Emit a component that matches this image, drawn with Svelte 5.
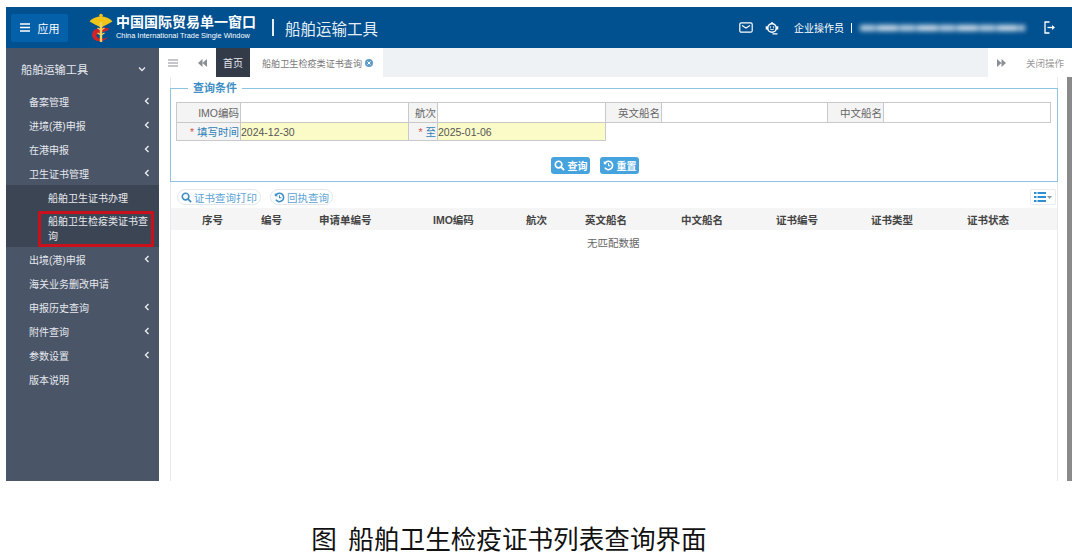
<script>
  const cjk = ['备案管理', '进境(港)申报', '在港申报'];
  const tail = [
    { text: '出境(港)申报', arrow: true },
    { text: '海关业务删改申请', arrow: false },
    { text: '申报历史查询', arrow: true },
    { text: '附件查询', arrow: true },
    { text: '参数设置', arrow: true },
    { text: '版本说明', arrow: false }
  ];
  const columns = [
    ['序号', 59], ['编号', 58], ['申请单编号', 114], ['IMO编码', 93], ['航次', 59],
    ['英文船名', 96], ['中文船名', 95], ['证书编号', 95], ['证书类型', 96], ['证书状态', 91]
  ];
</script>

{#snippet chevron()}
  <svg class="chev" viewBox="0 0 6 8" width="6" height="8"><path d="M4.500 1 1.500 4l3 3" fill="none" stroke="#e8ebef" stroke-width="1.400" /></svg>
{/snippet}

{#snippet searchIcon(color)}
  <svg viewBox="0 0 12 12" width="11" height="11"><circle cx="5" cy="5" r="3.600" fill="none" stroke={color} stroke-width="1.800" /><path d="M7.600 7.600 11 11" stroke={color} stroke-width="2" /></svg>
{/snippet}

{#snippet resetIcon(color)}
  <svg viewBox="0 0 12 12" width="11" height="11"><path d="M2.200 3.200A4.600 4.600 0 1 1 2 8.400" fill="none" stroke={color} stroke-width="1.700" /><path d="M.8 1v3.600h3.600z" fill={color} /><path d="M6 3.600v2.800h2.200" fill="none" stroke={color} stroke-width="1.100" /></svg>
{/snippet}

<div class="page">
  <header>
    <div class="apps">
      <svg viewBox="0 0 10 9" width="10" height="9"><path d="M0 1h10M0 4.500h10M0 8h10" stroke="#fff" stroke-width="1.400" /></svg>
      <span>应用</span>
    </div>
    <svg class="logo" viewBox="0 0 24 30" width="24" height="30">
      <path d="M12 3.500C8 3.500 3 5 .6 8.500 4 10.500 8 12.500 10.800 14h2.400C16 12.500 20 10.500 23.400 8.500 21 5 16 3.500 12 3.500z" fill="#f0c419" />
      <circle cx="12" cy="2.500" r="1.800" fill="#f0c419" />
      <path d="M4 18.500C6 14.500 17 14 20 15.500 20.500 19 9 18.500 7.500 22 7 26 15 27 19 24 15 29.500 6.500 29.500 4 25 2.500 22.500 3 20.500 4 18.500z" fill="#d3232a" />
      <rect x="10.800" y="9" width="2.400" height="20" fill="#f3d25a" />
      <path d="M8.500 15c3 2 4 2 7 0M8.500 20c3 2 4 2 7 0" fill="none" stroke="#f3d25a" stroke-width="1.300" />
    </svg>
    <div class="brand">
      <div class="cn">中国国际贸易单一窗口</div>
      <div class="en">China International Trade Single Window</div>
    </div>
    <div class="bar"></div>
    <div class="product">船舶运输工具</div>
    <div class="tools">
      <svg viewBox="0 0 14 11" width="14" height="11"><rect x=".8" y=".8" width="12.400" height="9.400" rx="1.500" fill="none" stroke="#fff" stroke-width="1.200" /><path d="M3 3.500 7 6l4-2.500" fill="none" stroke="#fff" stroke-width="1.200" /></svg>
      <svg class="bot" viewBox="0 0 14 14" width="14" height="14"><circle cx="7" cy="7" r="4.300" fill="none" stroke="#fff" stroke-width="1.600" /><path d="M1.400 5.200v3.400M12.600 5.200v3.400M7 1v1.500M7.500 12.900h5" stroke="#fff" stroke-width="1.400" /><path d="M5 7.800c1 1.200 3 1.200 4 0" fill="none" stroke="#fff" stroke-width=".9" /><circle cx="5.400" cy="6" r=".8" fill="#fff" /><circle cx="8.600" cy="6" r=".8" fill="#fff" /></svg>
      <span class="role">企业操作员</span>
      <span class="sep"></span>
      <span class="blurred"></span>
      <svg class="out" viewBox="0 0 12 13" width="12" height="13"><path d="M5.500 1H1v11h4.500" fill="none" stroke="#fff" stroke-width="1.300" /><path d="M3.500 6.500h6" stroke="#fff" stroke-width="1.300" /><path d="M8 4l3 2.500L8 9z" fill="#fff" /></svg>
    </div>
  </header>

  <div class="main">
    <aside>
      <div class="side-title">
        <span>船舶运输工具</span>
        <svg viewBox="0 0 8 6" width="8" height="6"><path d="M1 1.500 4 4.500l3-3" fill="none" stroke="#e8ebef" stroke-width="1.300" /></svg>
      </div>
      <nav>
        {#each cjk as text}
          <div class="item"><span>{text}</span>{@render chevron()}</div>
        {/each}
        <div class="item"><span>卫生证书管理</span>{@render chevron()}</div>
        <div class="sub">
          <div class="sub-item">船舶卫生证书办理</div>
          <div class="sub-item wrap">船舶卫生检疫类证书查询</div>
          <div class="marker"></div>
        </div>
        {#each tail as row}
          <div class="item"><span>{row.text}</span>{#if row.arrow}{@render chevron()}{/if}</div>
        {/each}
      </nav>
    </aside>

    <section class="content">
      <div class="tabs">
        <svg class="tab-menu" viewBox="0 0 10 8" width="10" height="8"><path d="M0 1h10M0 4h10M0 7h10" stroke="#8a8f94" stroke-width="1" /></svg>
        <svg class="tab-back" viewBox="0 0 9 8" width="9" height="8"><path d="M4.500 0v8L0 4zM9 0v8L4.500 4z" fill="#8a8f94" /></svg>
        <div class="tab-home">首页</div>
        <div class="tab-open">
          <span>船舶卫生检疫类证书查询</span>
          <svg viewBox="0 0 8 8" width="8" height="8"><circle cx="4" cy="4" r="4" fill="#5f9cc4" /><path d="M2.500 2.500l3 3M5.500 2.500l-3 3" stroke="#fff" stroke-width="1" /></svg>
        </div>
        <div class="tab-fill"></div>
        <svg class="tab-next" viewBox="0 0 9 8" width="9" height="8"><path d="M0 0v8l4.500-4zM4.500 0v8L9 4z" fill="#8a8f94" /></svg>
        <div class="tab-close">关闭操作</div>
      </div>

      <div class="body">
        <div class="pane">
          <fieldset>
            <legend>查询条件</legend>
            <div class="form">
              <div class="label">IMO编码</div><div class="field"></div>
              <div class="label">航次</div><div class="field"></div>
              <div class="label">英文船名</div><div class="field"></div>
              <div class="label">中文船名</div><div class="field"></div>
              <div class="label req"><i>*</i> 填写时间</div><div class="field must">2024-12-30</div>
              <div class="label req"><i>*</i> 至</div><div class="field must">2025-01-06</div>
            </div>
            <div class="actions">
              <button>{@render searchIcon('#fff')}<span>查询</span></button>
              <button>{@render resetIcon('#fff')}<span>重置</span></button>
            </div>
          </fieldset>

          <div class="toolbar">
            <button class="pill">{@render searchIcon('#3f8fc4')}<span>证书查询打印</span></button>
            <button class="pill">{@render resetIcon('#3f8fc4')}<span>回执查询</span></button>
            <button class="view">
              <svg viewBox="0 0 12 10" width="12" height="10"><path d="M0 1h2.500M0 5h2.500M0 9h2.500" stroke="#2f8fd0" stroke-width="2" /><path d="M3.500 1H12M3.500 5H12M3.500 9H12" stroke="#2f8fd0" stroke-width="2" /></svg>
              <svg viewBox="0 0 5 3" width="5" height="3"><path d="M0 0h5L2.500 3z" fill="#8a9aa8" /></svg>
            </button>
          </div>

          <div class="thead">
            {#each columns as [name, width]}
              <div style="width: {width}px">{name}</div>
            {/each}
          </div>
          <div class="empty">无匹配数据</div>
        </div>
        <div class="scroll"></div>
      </div>
    </section>
  </div>

  <div class="caption">图&nbsp;&nbsp;船舶卫生检疫证书列表查询界面</div>
</div>

<style>
  :global(body) {
    margin: 0;
    background: #fff;
  }

  .page {
    width: 1072px;
    height: 560px;
    box-sizing: border-box;
    padding: 7px 0 0 6px;
    overflow: hidden;
    font-family: "Liberation Sans", "Noto Sans CJK SC", sans-serif;
    font-size: 11px;
    color: #555;
  }

  header {
    height: 41px;
    background: #01508f;
    display: flex;
    align-items: center;
    color: #fff;
  }

  .apps {
    width: 57px;
    height: 28px;
    margin-left: 5px;
    background: #0560aa;
    border-radius: 2px;
    display: flex;
    align-items: center;
    justify-content: center;
    gap: 8px;
    font-size: 11px;
  }

  .logo {
    margin-left: 21px;
  }

  .brand {
    margin-left: 3px;
  }

  .cn {
    font-size: 14px;
    font-weight: 700;
    line-height: 17px;
  }

  .en {
    font-size: 7.400px;
    line-height: 10px;
  }

  .bar {
    width: 2px;
    height: 17px;
    background: #e6eef5;
    margin-left: 16px;
  }

  .product {
    font-size: 15.500px;
    margin-left: 11px;
    color: #e6eef5;
  }

  .tools {
    margin-left: auto;
    display: flex;
    align-items: center;
    height: 100%;
  }

  .bot {
    margin-left: 12px;
  }

  .role {
    font-size: 10px;
    margin-left: 15px;
  }

  .sep {
    width: 1px;
    height: 10px;
    background: #fff;
    margin-left: 7px;
  }

  .blurred {
    width: 165px;
    height: 6px;
    margin-left: 8px;
    background: repeating-linear-gradient(90deg, #c3d5e5 0 14px, #8fb3d0 14px 18px, #d5e0ea 18px 37px, #86abca 37px 40px);
    filter: blur(2.500px);
  }

  .out {
    margin: 0 16px 0 19px;
  }

  .main {
    display: flex;
    height: 433px;
  }

  aside {
    width: 153px;
    flex: none;
    background: #4a5568;
    color: #e6e9ee;
  }

  .side-title {
    height: 41px;
    padding: 0 13px 0 15px;
    display: flex;
    align-items: center;
    justify-content: space-between;
    font-size: 11.200px;
    box-sizing: border-box;
  }

  .item {
    height: 24px;
    padding: 0 9px 0 23px;
    display: flex;
    align-items: center;
    justify-content: space-between;
    font-size: 10px;
  }

  .sub {
    position: relative;
    background: #3c4554;
  }

  .sub-item {
    box-sizing: border-box;
    padding: 0 7px 2px 42px;
    font-size: 10px;
    height: 26px;
    display: flex;
    align-items: center;
  }

  .sub-item.wrap {
    height: 36px;
    line-height: 15px;
    width: 112px;
    padding: 0 0 1px 10px;
    margin-left: 32px;
  }

  .marker {
    position: absolute;
    left: 32px;
    top: 26px;
    width: 110px;
    height: 30px;
    border: 3px solid #c9101c;
    border-radius: 1px;
  }

  .content {
    flex: 1;
    min-width: 0;
    display: flex;
    flex-direction: column;
  }

  .tabs {
    height: 29px;
    flex: none;
    display: flex;
    align-items: center;
    padding-left: 9px;
    box-sizing: border-box;
  }

  .tab-back {
    margin-left: 20px;
  }

  .tab-home {
    width: 34px;
    height: 29px;
    margin-left: 9px;
    background: #333b48;
    color: #e6e9ee;
    font-size: 10px;
    display: flex;
    align-items: center;
    justify-content: center;
  }

  .tab-open {
    width: 133px;
    box-sizing: border-box;
    padding-left: 12px;
    display: flex;
    align-items: center;
    gap: 3px;
    font-size: 9.100px;
    color: #777;
    white-space: nowrap;
  }

  .tab-fill {
    width: 605px;
    height: 29px;
    background: #eff2f4;
  }

  .tab-next {
    margin-left: 9px;
  }

  .tab-close {
    margin-left: 20px;
    font-size: 9.500px;
    color: #999;
    white-space: nowrap;
  }

  .body {
    flex: 1;
    display: flex;
    min-height: 0;
  }

  .pane {
    width: 888px;
    margin-left: 11px;
    box-sizing: border-box;
    border-left: 1px solid #e6eaee;
    border-right: 1px solid #e6eaee;
  }

  .scroll {
    width: 5px;
    margin-left: auto;
    background: #8a8a8a;
  }

  fieldset {
    margin: 5px -1px 0;
    padding: 8px 5px 0;
    height: 100px;
    box-sizing: border-box;
    border: 1px solid #8cc4e2;
    min-width: 0;
  }

  legend {
    margin-left: 12px;
    padding: 0 5px;
    font-size: 11px;
    line-height: 12px;
    color: #3f8fc4;
    font-weight: 700;
  }

  .form {
    display: grid;
    grid-template-columns: 64px 168px 29px 168px 56px 166px 56px 167px;
    grid-template-rows: 20px 18px;
    border-top: 1px solid #c9c9c9;
    border-left: 1px solid #c9c9c9;
    width: 875px;
    box-sizing: border-box;
  }

  .label,
  .field {
    border-right: 1px solid #c9c9c9;
    border-bottom: 1px solid #c9c9c9;
    display: flex;
    align-items: center;
    box-sizing: border-box;
    font-size: 10.500px;
    white-space: nowrap;
  }

  .label {
    justify-content: flex-end;
    background: #f4f4f4;
    color: #666;
    padding-right: 1px;
  }

  .req {
    color: #2e7fb5;
  }

  .req i {
    color: #d9534f;
    font-style: normal;
    margin-right: 3px;
  }

  .must {
    background: #fbfbc8;
    color: #555;
  }

  .actions {
    display: flex;
    justify-content: flex-end;
    gap: 10px;
    margin-top: 16px;
    margin-right: 413px;
  }

  .actions button {
    height: 17px;
    width: 39px;
    border: 0;
    border-radius: 3px;
    background: #46a3de;
    color: #fff;
    padding: 0;
    font: 700 10px "Liberation Sans", "Noto Sans CJK SC", sans-serif;
    display: flex;
    align-items: center;
    justify-content: center;
    gap: 3px;
  }

  .toolbar {
    display: flex;
    align-items: center;
    gap: 9px;
    height: 16px;
    margin-top: 7px;
    padding: 0 1px 0 6px;
  }

  .pill {
    height: 16px;
    padding: 0 3px;
    border: 1px solid #e4e8ec;
    border-radius: 8px;
    background: #fff;
    color: #5aa3d4;
    font: 10.500px "Liberation Sans", "Noto Sans CJK SC", sans-serif;
    display: flex;
    align-items: center;
    gap: 2px;
  }

  .view {
    margin-left: auto;
    width: 26px;
    height: 16px;
    padding: 0;
    border: 1px solid #e8ecef;
    border-radius: 2px;
    background: #fff;
    display: flex;
    align-items: center;
    justify-content: center;
    gap: 1px;
  }

  .thead {
    height: 22px;
    margin-top: 3px;
    background: #f5f5f5;
    display: flex;
    align-items: center;
    padding-left: 31px;
    font-size: 10.500px;
    font-weight: 700;
    color: #444;
    white-space: nowrap;
  }

  .thead div {
    flex: none;
  }

  .empty {
    height: 24px;
    line-height: 24px;
    padding: 1px 0 0 416px;
    font-size: 10.500px;
    color: #666;
  }

  .caption {
    height: 58px;
    padding: 42px 60px 0 0;
    box-sizing: border-box;
    text-align: center;
    font-family: "Noto Sans CJK SC", sans-serif;
    font-size: 25.600px;
    line-height: 30px;
    color: #111;
    white-space: nowrap;
  }
</style>
